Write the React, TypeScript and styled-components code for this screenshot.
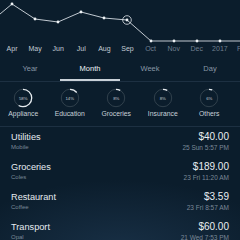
import React from "react";
import styled, { createGlobalStyle } from "styled-components";

const Global = createGlobalStyle`
  html, body { margin: 0; padding: 0; background: #0b1d2c; }
  body { font-family: "Liberation Sans", Arial, sans-serif; -webkit-font-smoothing: antialiased; }
`;

const Screen = styled.div`
  width: 240px;
  height: 240px;
  overflow: hidden;
  position: relative;
  background:
    radial-gradient(ellipse 160px 70px at 120px 250px, rgba(40, 70, 100, 0.45), rgba(40, 70, 100, 0) 100%),
    #0b1d2c;
  color: #e6ebef;
`;

const ChartSvg = styled.svg`
  display: block;
  width: 240px;
  height: 44px;
`;

const Axis = styled.div`
  display: flex;
  height: 10px;
  padding-left: 0.5px;
  white-space: nowrap;
`;

const AxisLabel = styled.div<{ $future?: boolean }>`
  flex: 0 0 23.1px;
  text-align: center;
  font-size: 7px;
  line-height: 10px;
  color: ${(p) => (p.$future ? "#6f7f8f" : "#c4ccd5")};
`;

const Tabs = styled.div`
  display: grid;
  grid-template-columns: repeat(4, 1fr);
  height: 27px;
  border-bottom: 1px solid #1d3042;
`;

const Tab = styled.div<{ $active?: boolean }>`
  position: relative;
  text-align: center;
  padding-top: 10px;
  font-size: 7.5px;
  line-height: 10px;
  color: ${(p) => (p.$active ? "#eef2f5" : "#8796a5")};
  &::after {
    content: "";
    display: ${(p) => (p.$active ? "block" : "none")};
    position: absolute;
    left: 0;
    right: 0;
    bottom: 0;
    height: 2px;
    background: #c9d1d8;
  }
`;

const Rings = styled.div`
  display: grid;
  grid-template-columns: repeat(5, 46.5px);
  padding: 6px 0 8px 0;
  border-bottom: 1px solid #1d3042;
`;

const RingItem = styled.div`
  display: flex;
  flex-direction: column;
  align-items: center;
  gap: 2px;
`;

const RingWrap = styled.div`
  position: relative;
  width: 20px;
  height: 20px;
`;

const RingPct = styled.span`
  position: absolute;
  inset: 0;
  display: flex;
  align-items: center;
  justify-content: center;
  font-size: 4.3px;
  color: #c2cad2;
`;

const RingLabel = styled.div`
  font-size: 6.8px;
  line-height: 8px;
  color: #c8d0d8;
`;

const List = styled.div`
  display: flex;
  flex-direction: column;
`;

const Row = styled.div`
  display: flex;
  justify-content: space-between;
  padding: 4px 11px 4px 11px;
`;

const Col = styled.div<{ $right?: boolean }>`
  display: flex;
  flex-direction: column;
  align-items: ${(p) => (p.$right ? "flex-end" : "flex-start")};
`;

const Title = styled.div`
  font-size: 9.2px;
  line-height: 12px;
  color: #e6ebef;
`;

const Amount = styled.div`
  font-size: 10px;
  line-height: 12px;
  color: #e9eef2;
`;

const Sub = styled.div`
  font-size: 6px;
  line-height: 9px;
  color: #7a8897;
`;

const DateText = styled.div`
  font-size: 6.5px;
  line-height: 10px;
  color: #7a8897;
`;

const pts: [number, number][] = [
  [0, 14],
  [12, 4],
  [35, 19],
  [58, 22],
  [81, 12],
  [104, 18],
  [127, 20],
  [151, 41],
  [174, 41],
  [197, 41],
  [220, 41],
  [240, 41],
];

const months = ["Apr", "May", "Jun", "Jul", "Aug", "Sep", "Oct", "Nov", "Dec", "2017", "Feb"];

const Chart = () => (
  <ChartSvg viewBox="0 0 240 44">
    <polyline
      points={pts.map((p) => p.join(",")).join(" ")}
      fill="none"
      stroke="#d6dde3"
      strokeWidth="0.9"
    />
    {pts.slice(1, 11).map(([x, y], i) => (
      <circle key={i} cx={x} cy={y} r="1.4" fill="#eef2f5" />
    ))}
    <circle cx={127} cy={20} r="4.3" fill="none" stroke="#dfe5ea" strokeWidth="0.8" />
  </ChartSvg>
);

const Ring = ({ pct }: { pct: number }) => {
  const r = 8.7;
  const c = 2 * Math.PI * r;
  return (
    <RingWrap>
      <svg width="20" height="20" viewBox="0 0 20 20">
        <circle cx="10" cy="10" r={r} fill="none" stroke="#34444f" strokeWidth="0.9" />
        <circle
          cx="10"
          cy="10"
          r={r}
          fill="none"
          stroke="#e6ebef"
          strokeWidth="1.3"
          strokeDasharray={`${(c * pct) / 100} ${c}`}
          transform="rotate(-90 10 10)"
        />
      </svg>
      <RingPct>{pct}%</RingPct>
    </RingWrap>
  );
};

const cats = [
  { name: "Appliance", pct: 58 },
  { name: "Education", pct: 14 },
  { name: "Groceries", pct: 8 },
  { name: "Insurance", pct: 8 },
  { name: "Others", pct: 6 },
];

const items = [
  { title: "Utilities", sub: "Mobile", amount: "$40.00", date: "25 Sun 5:57 PM" },
  { title: "Groceries", sub: "Coles", amount: "$189.00", date: "23 Fri 11:20 AM" },
  { title: "Restaurant", sub: "Coffee", amount: "$3.59", date: "23 Fri 8:57 AM" },
  { title: "Transport", sub: "Opal", amount: "$60.00", date: "21 Wed 7:53 PM" },
];

export default function App() {
  return (
    <>
      <Global />
      <Screen>
        <Chart />
        <Axis>
          {months.map((m, i) => (
            <AxisLabel key={m} $future={i >= 6}>
              {m}
            </AxisLabel>
          ))}
        </Axis>
        <Tabs>
          <Tab>Year</Tab>
          <Tab $active>Month</Tab>
          <Tab>Week</Tab>
          <Tab>Day</Tab>
        </Tabs>
        <Rings>
          {cats.map((c) => (
            <RingItem key={c.name}>
              <Ring pct={c.pct} />
              <RingLabel>{c.name}</RingLabel>
            </RingItem>
          ))}
        </Rings>
        <List>
          {items.map((it) => (
            <Row key={it.title}>
              <Col>
                <Title>{it.title}</Title>
                <Sub>{it.sub}</Sub>
              </Col>
              <Col $right>
                <Amount>{it.amount}</Amount>
                <DateText>{it.date}</DateText>
              </Col>
            </Row>
          ))}
        </List>
      </Screen>
    </>
  );
}
